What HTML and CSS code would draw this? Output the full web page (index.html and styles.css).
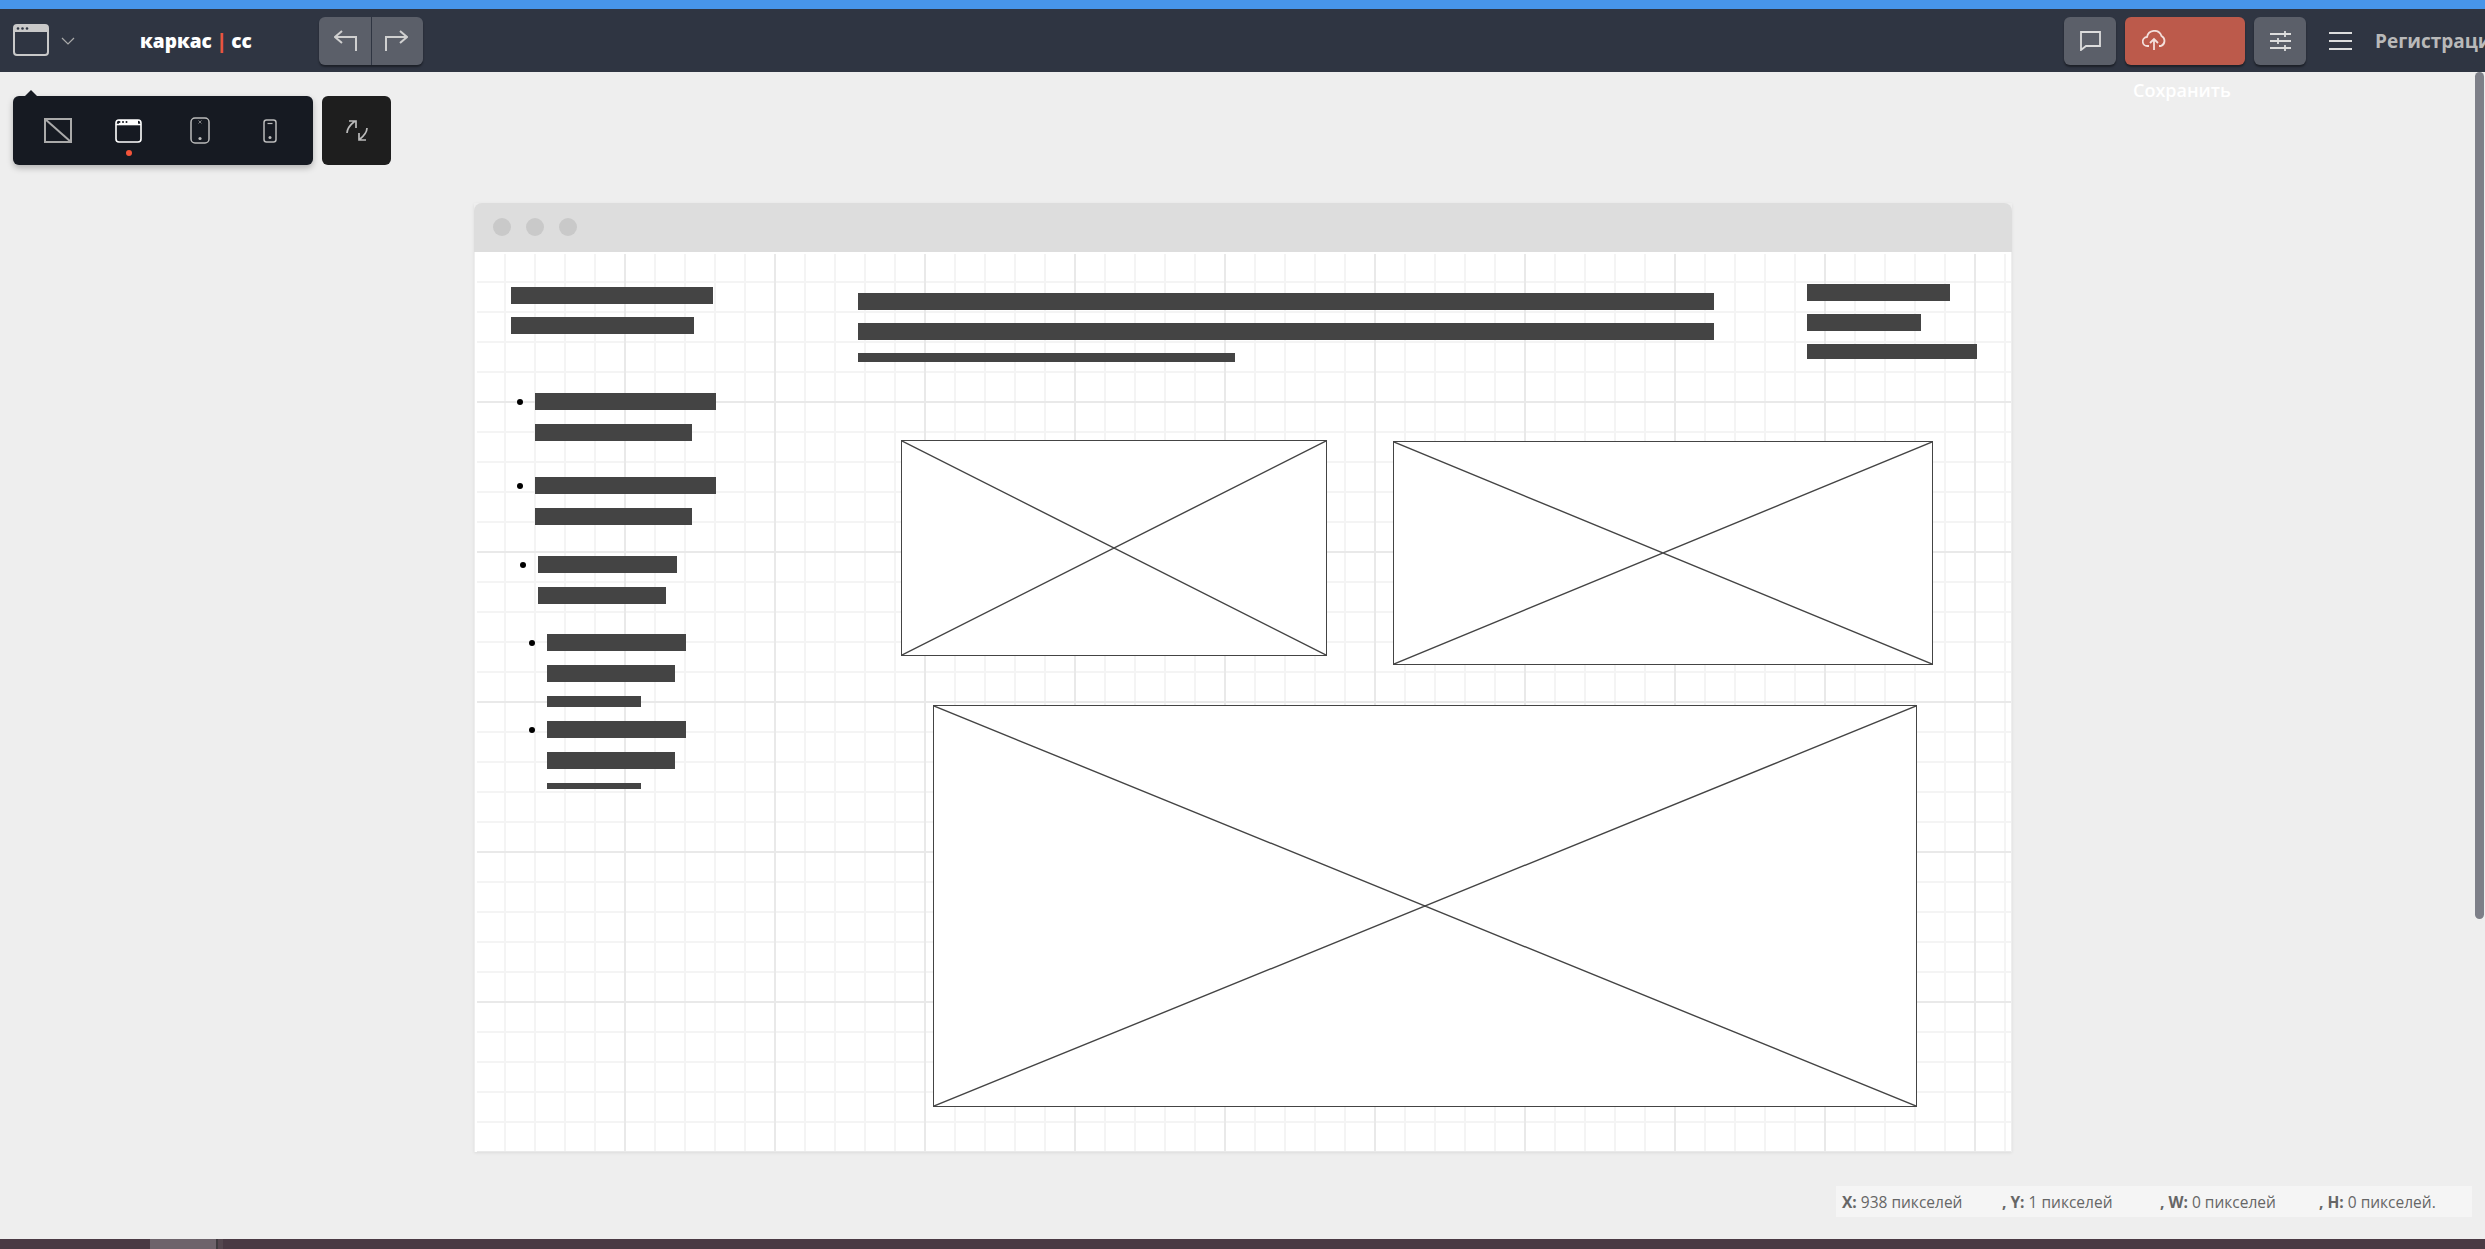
FILE: index.html
```html
<!DOCTYPE html>
<html lang="ru">
<head>
  <meta charset="UTF-8">
  <meta name="viewport" content="width=device-width, initial-scale=1.0">
  <title>каркас | сс</title>
  <link rel="stylesheet" href="styles.css">
</head>
<body>

  <div class="topline"></div>

  <header class="header">
    <div class="header-left">
      <svg class="win-icon" width="36" height="32" viewBox="0 0 36 32">
        <path d="M4 1H32A3 3 0 0 1 35 4V8H1V4A3 3 0 0 1 4 1Z" fill="#c9c9c9"/>
        <rect x="1" y="1" width="34" height="30" rx="3" fill="none" stroke="#c9c9c9" stroke-width="2"/>
        <circle cx="5" cy="4.5" r="1.3" fill="#2f3542"/><circle cx="9.5" cy="4.5" r="1.3" fill="#2f3542"/><circle cx="14" cy="4.5" r="1.3" fill="#2f3542"/>
      </svg>
      <svg class="chevron" width="14" height="8" viewBox="0 0 14 8"><path d="M1 1L7 7L13 1" fill="none" stroke="#aaa" stroke-width="1.2"/></svg>
      <div class="logo">каркас <span class="logo-pipe">|</span> сс</div>
      <div class="history">
        <button class="hist-btn">
          <svg width="24" height="22" viewBox="0 0 24 22"><path d="M8 1L1 7L8 13M1 7H22V21" fill="none" stroke="#d0d0d0" stroke-width="2"/></svg>
        </button>
        <button class="hist-btn">
          <svg width="24" height="22" viewBox="0 0 24 22"><path d="M16 1L23 7L16 13M23 7H2V21" fill="none" stroke="#d0d0d0" stroke-width="2"/></svg>
        </button>
      </div>
    </div>
    <div class="header-right">
      <button class="tool-btn">
        <svg width="21" height="20" viewBox="0 0 21 20"><path d="M1 1H20V15H6L1 19Z" fill="none" stroke="#ddd" stroke-width="1.8"/></svg>
      </button>
      <button class="save-btn">
        <svg width="24" height="21" viewBox="0 0 24 21"><path d="M7 16H5.5A4.5 4.5 0 0 1 5 7A7.5 7.5 0 0 1 19.5 6A5.5 5.5 0 0 1 19 16H17M12 20V10M8 13L12 9L16 13" fill="none" stroke="#f3dfdb" stroke-width="1.8"/></svg>
      </button>
      <button class="tool-btn">
        <svg width="21" height="21" viewBox="0 0 21 21"><path d="M0 4H21M0 11H21M0 18H21M15 1V7M8 8V14M15 15V21" fill="none" stroke="#ddd" stroke-width="1.8"/></svg>
      </button>
      <svg class="burger" width="23" height="20" viewBox="0 0 23 20"><path d="M0 2H23M0 10H23M0 18H23" fill="none" stroke="#ddd" stroke-width="2"/></svg>
      <a class="signup">Регистрации</a>
    </div>
  </header>

  <div class="save-tip">Сохранить</div>
  <div class="scrollbar"></div>

  <main class="main">
    <div class="toolrow">
      <div class="devices">
        <div class="device">
          <svg width="28" height="25" viewBox="0 0 28 25"><rect x="1" y="1" width="26" height="23" fill="none" stroke="#aaa" stroke-width="2"/><path d="M1 1L27 24" stroke="#aaa" stroke-width="2"/></svg>
        </div>
        <div class="device device-on">
          <svg width="27" height="24" viewBox="0 0 27 24">
            <rect x="1" y="1" width="25" height="22" rx="3" fill="none" stroke="#fff" stroke-width="1.6"/>
            <path d="M1 5.5H26" stroke="#fff" stroke-width="1.6"/>
            <path d="M4 1H23V5H4Z" fill="#fff"/>
            <circle cx="4.5" cy="3" r="1" fill="#161a22"/><circle cx="8" cy="3" r="1" fill="#161a22"/><circle cx="11.5" cy="3" r="1" fill="#161a22"/>
          </svg>
        </div>
        <div class="device">
          <svg width="20" height="27" viewBox="0 0 20 27"><rect x="1" y="1" width="18" height="25" rx="4" fill="none" stroke="#bbb" stroke-width="1.5"/><path d="M8.5 3.5L11.5 6.5M11.5 3.5L8.5 6.5" stroke="#999" stroke-width="0.8"/><circle cx="10" cy="21.5" r="1.6" fill="#bbb"/></svg>
        </div>
        <div class="device device-phone">
          <svg width="14" height="24" viewBox="0 0 14 24"><rect x="1" y="1" width="12" height="22" rx="2.5" fill="none" stroke="#bbb" stroke-width="1.5"/><path d="M4.5 4.5H9.5" stroke="#bbb" stroke-width="1.2"/><circle cx="7" cy="18.5" r="1.5" fill="#bbb"/></svg>
        </div>
      </div>
      <button class="fit-btn">
        <svg width="22" height="23" viewBox="0 0 22 23"><path d="M1 14C1 9 4 6 9 2M3 2H10V9M21 9C21 14 18 17 13 21M20 21H13V14" fill="none" stroke="#bbb" stroke-width="1.7"/></svg>
      </button>
    </div>

    <div class="canvas">
      <div class="canvas-bar">
        <span class="canvas-dot"></span><span class="canvas-dot"></span><span class="canvas-dot"></span>
      </div>
      <div class="canvas-body">

        <div class="wf-side">
          <div class="wf-lines">
            <div class="bar w202"></div>
            <div class="bar w183"></div>
          </div>

          <div class="wf-item item-a">
            <span class="dot"></span>
            <div class="wf-lines gap14"><div class="bar w181"></div><div class="bar w157"></div></div>
          </div>
          <div class="wf-item item-a item-next">
            <span class="dot"></span>
            <div class="wf-lines gap14"><div class="bar w181"></div><div class="bar w157"></div></div>
          </div>
          <div class="wf-item item-b">
            <span class="dot"></span>
            <div class="wf-lines gap14"><div class="bar w139"></div><div class="bar w128"></div></div>
          </div>
          <div class="wf-item item-c">
            <span class="dot"></span>
            <div class="wf-lines gap14"><div class="bar w139"></div><div class="bar w128"></div><div class="bar w94 h11"></div></div>
          </div>
          <div class="wf-item item-d">
            <span class="dot"></span>
            <div class="wf-lines gap14"><div class="bar w139"></div><div class="bar w128"></div><div class="bar w94 h6"></div></div>
          </div>
        </div>

        <div class="wf-main">
          <div class="wf-top">
            <div class="wf-lines wf-title">
              <div class="bar w856"></div>
              <div class="bar w856"></div>
              <div class="bar w377 h9"></div>
            </div>
            <div class="wf-lines wf-aside">
              <div class="bar w143"></div>
              <div class="bar w114"></div>
              <div class="bar w170 h15"></div>
            </div>
          </div>
          <div class="wf-row">
            <svg class="wf-img img-a" viewBox="0 0 100 100" preserveAspectRatio="none"><path class="wf-cross" d="M0 0L100 100M100 0L0 100"/></svg>
            <svg class="wf-img img-b" viewBox="0 0 100 100" preserveAspectRatio="none"><path class="wf-cross" d="M0 0L100 100M100 0L0 100"/></svg>
          </div>
          <svg class="wf-img img-c" viewBox="0 0 100 100" preserveAspectRatio="none"><path class="wf-cross" d="M0 0L100 100M100 0L0 100"/></svg>
        </div>

      </div>
    </div>

    <div class="status">
      <span class="status-part part-x"><b>X:</b> 938 пикселей</span>
      <span class="status-part part-y"><b>, Y:</b> 1 пикселей</span>
      <span class="status-part part-w"><b>, W:</b> 0 пикселей</span>
      <span class="status-part"><b>, H:</b> 0 пикселей.</span>
    </div>
  </main>

  <div class="taskbar">
    <span class="task-item"></span><span class="task-gap"></span><span class="task-end"></span>
  </div>

</body>
</html>
```

FILE: styles.css
```css
html, body {
  height: 100%;
}
body {
  margin: 0;
  display: flex;
  flex-direction: column;
  overflow: hidden;
  position: relative;
  background-color: #eeeeee;
  font-family: "Open Sans", sans-serif;
}
button {
  border: none;
  padding: 0;
  cursor: pointer;
  display: flex;
  align-items: center;
  justify-content: center;
}
svg {
  display: block;
}

/* barra de arriba */
.topline {
  flex: none;
  height: 9px;
  background-color: #4795ea;
}
.header {
  flex: none;
  height: 63px;
  display: flex;
  background-color: #2f3542;
  overflow: hidden;
}
.header-left {
  flex: none;
  width: 2064px;
  display: flex;
  align-items: center;
}
.win-icon {
  margin: 0 0 0 13px;
  position: relative;
  top: -1px;
}
.chevron {
  margin-left: 12px;
}
.logo {
  width: 179px;
  margin-left: 65px;
  color: #fff;
  font-size: 19px;
  font-weight: 800;
  white-space: pre;
}
.logo-pipe {
  color: #e8563f;
}
.history {
  display: flex;
  gap: 1px;
  height: 48px;
  box-shadow: 0 2px 2px rgba(0, 0, 0, 0.4);
  border-radius: 6px;
}
.hist-btn {
  width: 51.5px;
  background-color: #5b5f69;
}
.hist-btn:first-child {
  padding-left: 2px;
  border-radius: 6px 0 0 6px;
}
.hist-btn:last-child {
  padding-right: 3px;
  border-radius: 0 6px 6px 0;
}
.header-right {
  flex: none;
  display: flex;
  align-items: center;
}
.tool-btn {
  width: 52px;
  height: 48px;
  border-radius: 6px;
  background-color: #5b5f69;
  box-shadow: 0 2px 2px rgba(0, 0, 0, 0.4);
}
.save-btn {
  width: 120px;
  height: 48px;
  margin: 0 9px;
  padding-left: 17px;
  justify-content: flex-start;
  border-radius: 6px;
  background-color: #bc5a4b;
  box-shadow: 0 2px 2px rgba(0, 0, 0, 0.4);
}
.burger {
  margin-left: 23px;
}
.signup {
  margin-left: 23px;
  color: #b9b9b9;
  font-size: 19px;
  font-weight: 700;
  white-space: nowrap;
}
.save-tip {
  position: absolute;
  left: 2133px;
  top: 78px;
  color: #fff;
  font-size: 18px;
  font-weight: 600;
}
.scrollbar {
  position: absolute;
  left: 2475px;
  top: 72px;
  width: 9px;
  height: 847px;
  border-radius: 5px;
  background-color: #7d7f88;
}

/* zona de trabajo */
.main {
  flex: 1;
  display: flex;
  flex-direction: column;
}
.toolrow {
  display: flex;
  gap: 9px;
  margin: 24px 0 38px 13px;
}
.devices {
  position: relative;
  box-sizing: border-box;
  width: 300px;
  height: 69px;
  padding-left: 9px;
  display: grid;
  grid-template-columns: repeat(4, 71px);
  border-radius: 6px;
  background-color: #161a22;
  box-shadow: 0 3px 6px rgba(0, 0, 0, 0.25);
}
.devices::before {
  content: "";
  position: absolute;
  left: 12px;
  top: -6px;
  border-left: 6px solid transparent;
  border-right: 6px solid transparent;
  border-bottom: 6px solid #161a22;
}
.device {
  position: relative;
  display: flex;
  align-items: center;
  justify-content: center;
  height: 69px;
}
.device-phone {
  padding-right: 2px;
}
.device-on::after {
  content: "";
  position: absolute;
  left: 50%;
  top: 54px;
  width: 6px;
  height: 6px;
  margin-left: -3px;
  border-radius: 50%;
  background-color: #f4543a;
}
.fit-btn {
  width: 69px;
  height: 69px;
  border-radius: 6px;
  background-color: #1e1e1e;
}

/* lienzo */
.canvas {
  flex: none;
  width: 1538px;
  height: 949px;
  margin-left: 474px;
  box-shadow: 0 1px 3px rgba(0, 0, 0, 0.08);
}
.canvas-bar {
  height: 48px;
  padding: 0 0 1px 19px;
  display: flex;
  align-items: center;
  gap: 15px;
  border-radius: 8px 8px 0 0;
  background-color: #dddddd;
}
.canvas-dot {
  width: 18px;
  height: 18px;
  border-radius: 50%;
  background-color: #c9c9c9;
}
.canvas-body {
  height: 900px;
  margin: 0 1px;
  display: flex;
  overflow: hidden;
  background-color: #fff;
  background-image:
    linear-gradient(to right, #e9e9e9 2px, transparent 2px),
    linear-gradient(to bottom, #e9e9e9 2px, transparent 2px),
    linear-gradient(to right, #f4f4f4 2px, transparent 2px),
    linear-gradient(to bottom, #f4f4f4 2px, transparent 2px);
  background-size: 150px 150px, 150px 150px, 30px 30px, 30px 30px;
  background-position: -1px -1px;
  box-shadow: inset 2px 2px 0 #fff;
}

/* elementos del wireframe */
.bar {
  height: 17px;
  background-color: #444444;
}
.h15 { height: 15px; }
.h11 { height: 11px; }
.h9 { height: 9px; }
.h6 { height: 6px; }
.w94 { width: 94px; }
.w114 { width: 114px; }
.w128 { width: 128px; }
.w139 { width: 139px; }
.w143 { width: 143px; }
.w157 { width: 157px; }
.w170 { width: 170px; }
.w181 { width: 181px; }
.w183 { width: 183px; }
.w202 { width: 202px; }
.w377 { width: 377px; }
.w856 { width: 856px; }

.wf-lines {
  display: flex;
  flex-direction: column;
  gap: 13px;
}
.wf-lines.gap14 {
  gap: 14px;
}
.wf-side {
  flex: none;
  width: 347px;
  padding: 35px 0 0 36px;
}
.wf-item {
  display: flex;
  align-items: flex-start;
}
.dot {
  flex: none;
  width: 6px;
  height: 6px;
  margin: 6px 12px 0 0;
  border-radius: 50%;
  background-color: #000;
}
.item-a {
  margin: 59px 0 0 6px;
}
.item-a.item-next {
  margin-top: 36px;
}
.item-b {
  margin: 31px 0 0 9px;
}
.item-c {
  margin: 30px 0 0 18px;
}
.item-d {
  margin: 14px 0 0 18px;
}

.wf-main {
  flex: 1;
  min-width: 0;
}
.wf-top {
  height: 188px;
  display: flex;
  align-items: flex-start;
}
.wf-title {
  margin: 41px 93px 0 0;
}
.wf-aside {
  margin-top: 32px;
}
.wf-row {
  display: flex;
  align-items: flex-start;
  gap: 66px;
  margin-left: 43px;
}
.wf-img {
  box-sizing: border-box;
  border: 1px solid #444444;
  background-color: #fff;
}
.wf-cross {
  fill: none;
  stroke: #444444;
  stroke-width: 1.4px;
  vector-effect: non-scaling-stroke;
}
.img-a {
  width: 426px;
  height: 216px;
}
.img-b {
  width: 540px;
  height: 224px;
  margin-top: 1px;
}
.img-c {
  width: 984px;
  height: 402px;
  margin: 40px 0 0 75px;
}

/* barra de estado */
.status {
  width: 636px;
  height: 31px;
  margin: 34px 0 0 1836px;
  padding-left: 6px;
  box-sizing: border-box;
  display: flex;
  align-items: center;
  background-color: #f5f5f5;
  color: #666666;
  font-size: 15.5px;
  font-weight: 400;
  white-space: nowrap;
}
.status b {
  font-weight: 700;
}
.status-part {
  flex: none;
}
.part-x { width: 160px; }
.part-y { width: 158px; }
.part-w { width: 159px; }

.taskbar {
  flex: none;
  height: 10px;
  display: flex;
  padding-left: 150px;
  background-color: #4a3a44;
}
.task-item {
  width: 66px;
  background-color: #6d636b;
}
.task-gap {
  width: 2px;
  background-color: #3e3a3e;
}
.task-end {
  width: 5px;
  background-color: #55474f;
}
```
